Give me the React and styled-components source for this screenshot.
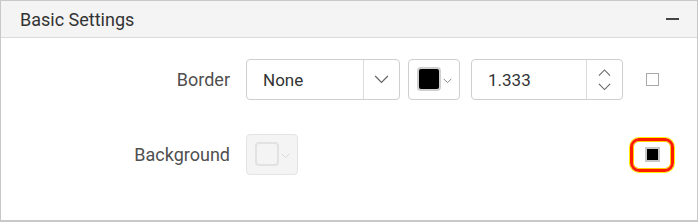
import React from 'react';
import styled, { createGlobalStyle } from 'styled-components';

const Global = createGlobalStyle`
    body {
        margin: 0;
        background: #fff;
        font-family: Roboto, "Liberation Sans", sans-serif;
    }
`;

const Panel = styled.div`
    box-sizing: border-box;
    width: 698px;
    height: 222px;
    border: 1px solid #c8c8c8;
    border-bottom-width: 2px;
    background: #fff;
`;

const Header = styled.div`
    height: 36px;
    display: flex;
    align-items: center;
    justify-content: space-between;
    padding: 0 18px 0 19px;
    background: #f4f4f4;
    border-bottom: 1px solid #dadada;
`;

const Title = styled.span`
    font-size: 18px;
    color: #333;
`;

const Collapse = styled.span`
    width: 13px;
    height: 2px;
    background: #444;
`;

const Body = styled.div`
    display: flex;
    flex-direction: column;
    gap: 34px;
    padding: 21px 23px 0 0;
`;

const Row = styled.div`
    display: flex;
    align-items: center;
    height: 41px;
`;

const Label = styled.span`
    width: 229px;
    margin-right: 16px;
    text-align: right;
    font-size: 18px;
    color: #505050;
`;

const Controls = styled.div`
    display: flex;
    align-items: center;
    gap: 8px;
    flex: 1;
`;

const Box = styled.div`
    box-sizing: border-box;
    display: flex;
    align-items: stretch;
    height: 41px;
    width: ${p => p.$w}px;
    margin-left: ${p => p.$offset || 0}px;
    border: 1px solid ${p => (p.$disabled ? '#e4e4e4' : '#cfcfcf')};
    border-radius: 4px;
    background: ${p => (p.$disabled ? '#f4f4f4' : '#fff')};
`;

const Value = styled.div`
    flex: 1;
    display: flex;
    align-items: center;
    padding-left: 16px;
    font-size: 17px;
    color: #333;
`;

const Side = styled.div`
    width: 35px;
    display: flex;
    flex-direction: column;
    align-items: center;
    justify-content: center;
    gap: 7px;
    border-left: 1px solid #dcdcdc;
`;

const Swatch = styled.div`
    box-sizing: border-box;
    width: 24px;
    height: 24px;
    margin: 7px 2px 0 8px;
    border-radius: 4px;
    border: 2px solid ${p => (p.$disabled ? '#e2e2e2' : '#cfcfcf')};
    background: ${p => (p.$disabled ? '#f4f4f4' : '#000')};
`;

const SmallArrow = styled.div`
    display: flex;
    align-items: center;
    padding-top: 2px;
`;

const CheckCell = styled.div`
    box-sizing: border-box;
    width: 44px;
    height: 34px;
    display: flex;
    align-items: center;
    justify-content: center;
    border-radius: 9px;
    ${p =>
        p.$focus &&
        `
        border: 3px solid #ff1a00;
        box-shadow: 0 0 0 1px #ffee00, inset 0 0 0 1px #ffd000;
    `}
`;

const Check = styled.div`
    box-sizing: border-box;
    width: ${p => (p.$checked ? 15 : 13)}px;
    height: ${p => (p.$checked ? 15 : 13)}px;
    border: ${p => (p.$checked ? '2px solid #c8c8c8' : '1px solid #a8a8a8')};
    background: ${p => (p.$checked ? '#000' : '#fff')};
`;

const Chevron = ({ up, size = 14, color = '#666' }) => (
    <svg width={size} height={size / 2 + 1} viewBox="0 0 14 8">
        <polyline
            points={up ? '1,7 7,1 13,7' : '1,1 7,7 13,1'}
            fill="none"
            stroke={color}
            strokeWidth="1.2"
        />
    </svg>
);

const ColorPicker = ({ disabled }) => (
    <Box $w={52} $disabled={disabled}>
        <Swatch $disabled={disabled} />
        <SmallArrow>
            <Chevron size={9} color={disabled ? '#d0d0d0' : '#666'} />
        </SmallArrow>
    </Box>
);

export default function App() {
    return (
        <>
            <Global />
            <Panel>
                <Header>
                    <Title>Basic Settings</Title>
                    <Collapse />
                </Header>
                <Body>
                    <Row>
                        <Label>Border</Label>
                        <Controls>
                            <Box $w={154}>
                                <Value>None</Value>
                                <Side>
                                    <Chevron size={15} />
                                </Side>
                            </Box>
                            <ColorPicker />
                            <Box $w={152} $offset={3}>
                                <Value>1.333</Value>
                                <Side>
                                    <Chevron up size={13} />
                                    <Chevron size={13} />
                                </Side>
                            </Box>
                        </Controls>
                        <CheckCell>
                            <Check />
                        </CheckCell>
                    </Row>
                    <Row>
                        <Label>Background</Label>
                        <Controls>
                            <ColorPicker disabled />
                        </Controls>
                        <CheckCell $focus>
                            <Check $checked />
                        </CheckCell>
                    </Row>
                </Body>
            </Panel>
        </>
    );
}
